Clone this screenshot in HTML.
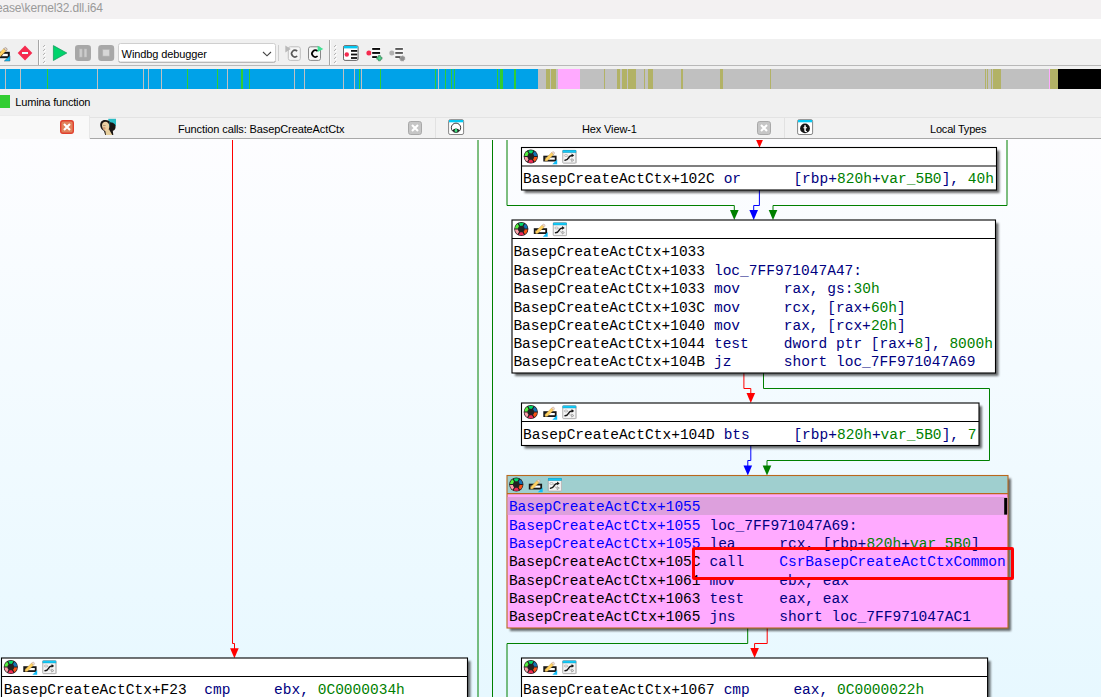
<!DOCTYPE html>
<html><head><meta charset="utf-8"><title>IDA</title>
<style>
html,body{margin:0;padding:0}
body{width:1101px;height:697px;overflow:hidden;position:relative;background:#f0f0f0;font-family:"Liberation Sans",sans-serif;font-size:12px;color:#000}
.abs{position:absolute}
#title{position:absolute;left:0;top:0;width:1101px;height:19px;background:#f3f1f2}
#title span{position:absolute;right:998.3px;top:0px;font-size:12px;letter-spacing:-0.16px;color:#9a9a9a;white-space:nowrap;line-height:16px}
#menu{position:absolute;left:0;top:19px;width:1101px;height:20px;background:#fff}
#tb{position:absolute;left:0;top:39px;width:1101px;height:27px;background:#f0f0f0;border-bottom:1px solid #b8b8b8;box-sizing:border-box}
#nav{position:absolute;left:0;top:69px;width:1101px;height:20px;overflow:hidden}
#nav i{position:absolute;top:0;height:20px;display:block}
#graph{position:absolute;left:0;top:139px;width:1101px;height:558px;background:linear-gradient(#fdfdff,#e7f8ff);overflow:hidden}
#g2{position:absolute;left:0;top:-139px;width:1101px;height:697px}
.blk{position:absolute;box-sizing:border-box;border:1px solid #000;background:#fff;box-shadow:2px 2px 2px rgba(0,0,0,.7)}
.blk .hd{height:17px;border-bottom:1px solid #000}
.blk.hl{border-color:#C07840;background:#FFAAFF}
.blk.hl .hd{background:#A0CFCF;border-bottom-color:#C07840}
.ic{position:absolute}
.t{position:absolute;font-family:"Liberation Mono",monospace;font-size:14.53px;line-height:18px;white-space:pre}
.k{color:#000} .n{color:#000080} .g{color:#008000} .b{color:#0000FF} .b2{color:#0000FF}
.ui{position:absolute;white-space:nowrap;line-height:14px}
</style></head><body>
<div id="title"><span>ease\kernel32.dll.i64</span></div>
<div id="menu"></div>
<div id="tb"></div>

<svg class="abs" style="left:0;top:39px" width="420" height="27" viewBox="0 39 420 27">
<!-- pencil (cut) -->
<rect x="-7" y="52.8" width="15.8" height="4.4" fill="#fff" stroke="#141414" stroke-width="2"/>
<path d="M-3 53.8H3.6L1.4 56.4H-3Z" fill="#141414"/>
<path d="M4.3 61H9.9V55.8Z" fill="#10C0F8" stroke="#16506a" stroke-width="0.5"/>
<path d="M-3 57.2L-2.6 55.2L3.9 48.6L6.1 50.8L-0.4 57.2Z" fill="#FFD262" stroke="#C89A40" stroke-width="0.4"/>
<path d="M3.9 48.6L4.4 48.1A1.65 1.65 0 0 1 6.8 50.3L6.1 50.8Z" fill="#F6DCCC" stroke="#8c847c" stroke-width="0.7"/>
<!-- stop sign diamond -->
<path d="M25 45.6L32.3 53L25 60.4L17.7 53Z" fill="#F52B4F"/>
<rect x="22" y="52" width="6" height="2" fill="#eaffff"/>
<!-- separators & grips -->
<rect x="38" y="40" width="1" height="25" fill="#a6a6a6"/><rect x="39" y="40" width="1" height="25" fill="#fdfdfd"/>
<g fill="#b4b4b4"><rect x="44" y="45" width="1" height="1"/><rect x="43" y="46" width="1" height="1"/><rect x="45" y="46" width="1" height="1" fill="#fff"/><rect x="44" y="47" width="1" height="1" fill="#fff"/><rect x="44" y="49" width="1" height="1"/><rect x="43" y="50" width="1" height="1"/><rect x="45" y="50" width="1" height="1" fill="#fff"/><rect x="44" y="51" width="1" height="1" fill="#fff"/><rect x="44" y="53" width="1" height="1"/><rect x="43" y="54" width="1" height="1"/><rect x="45" y="54" width="1" height="1" fill="#fff"/><rect x="44" y="55" width="1" height="1" fill="#fff"/><rect x="44" y="57" width="1" height="1"/><rect x="43" y="58" width="1" height="1"/><rect x="45" y="58" width="1" height="1" fill="#fff"/><rect x="44" y="59" width="1" height="1" fill="#fff"/><rect x="44" y="61" width="1" height="1"/><rect x="43" y="62" width="1" height="1"/><rect x="45" y="62" width="1" height="1" fill="#fff"/><rect x="44" y="63" width="1" height="1" fill="#fff"/></g>
<!-- play -->
<path d="M53.4 45.6V60.5L66.8 53Z" fill="#00D46C" stroke="#13935a" stroke-width="0.7" stroke-linejoin="round"/>
<!-- pause -->
<rect x="75" y="45" width="16" height="16" rx="3.2" fill="#a8a8a8"/>
<rect x="79.6" y="49" width="2.5" height="8" fill="#cdcdcd" stroke="#bdbdbd" stroke-width="0.5"/><rect x="84.2" y="49" width="2.5" height="8" fill="#cdcdcd" stroke="#bdbdbd" stroke-width="0.5"/>
<!-- stop -->
<rect x="98.2" y="45" width="16" height="16" rx="3.2" fill="#a8a8a8"/>
<rect x="102.8" y="49.5" width="6.6" height="6.6" fill="#d6d6d6" stroke="#b4b4b4" stroke-width="0.6"/>
<!-- combo -->
<rect x="118.5" y="43.5" width="157" height="18.6" rx="2" fill="#fff" stroke="#cfcfcf" stroke-width="1"/>
<path d="M118.8 61.2Q118.8 62.4 120.5 62.4H273.5Q275.4 62.4 275.4 61" fill="none" stroke="#b4b4b4" stroke-width="1"/>
<path d="M263 52L267 55.8L271 52" fill="none" stroke="#444" stroke-width="1.1"/>
<rect x="278" y="45" width="1" height="16" fill="#cfcfcf"/>
<!-- C icons -->
<rect x="288.3" y="46.8" width="12" height="13.6" rx="2" fill="#f6f6f6" stroke="#b9b9b9" stroke-width="0.9"/>
<path d="M297.2 51.2A3.3 3.3 0 1 0 297.2 56" fill="none" stroke="#595959" stroke-width="1.6"/>
<path d="M285.3 45.6V52.4L290.8 49Z" fill="#b8b8b8"/>
<rect x="308.5" y="46.8" width="12" height="13.6" rx="2" fill="#f6f6f6" stroke="#7c7c7c" stroke-width="0.9"/>
<path d="M317.6 51.2A3.3 3.3 0 1 0 317.6 56" fill="none" stroke="#000" stroke-width="1.7"/>
<path d="M317.6 45.7V52.1L323.3 48.9Z" fill="#3FE293"/>
<rect x="329" y="40" width="1" height="25" fill="#a6a6a6"/><rect x="330" y="40" width="1" height="25" fill="#fdfdfd"/>
<g fill="#b4b4b4"><rect x="335" y="45" width="1" height="1"/><rect x="334" y="46" width="1" height="1"/><rect x="336" y="46" width="1" height="1" fill="#fff"/><rect x="335" y="47" width="1" height="1" fill="#fff"/><rect x="335" y="49" width="1" height="1"/><rect x="334" y="50" width="1" height="1"/><rect x="336" y="50" width="1" height="1" fill="#fff"/><rect x="335" y="51" width="1" height="1" fill="#fff"/><rect x="335" y="53" width="1" height="1"/><rect x="334" y="54" width="1" height="1"/><rect x="336" y="54" width="1" height="1" fill="#fff"/><rect x="335" y="55" width="1" height="1" fill="#fff"/><rect x="335" y="57" width="1" height="1"/><rect x="334" y="58" width="1" height="1"/><rect x="336" y="58" width="1" height="1" fill="#fff"/><rect x="335" y="59" width="1" height="1" fill="#fff"/><rect x="335" y="61" width="1" height="1"/><rect x="334" y="62" width="1" height="1"/><rect x="336" y="62" width="1" height="1" fill="#fff"/><rect x="335" y="63" width="1" height="1" fill="#fff"/></g>
<!-- icon3 -->
<rect x="343.5" y="45.6" width="14.6" height="14.8" rx="1.6" fill="#fff" stroke="#555" stroke-width="0.9"/>
<rect x="344" y="46" width="13.6" height="2.4" fill="#06C8F2"/>
<circle cx="346.8" cy="54.5" r="2.2" fill="#F52B4F"/>
<g fill="#111"><rect x="351" y="50" width="6.2" height="1.8"/><rect x="351" y="53.6" width="6.2" height="1.8"/><rect x="351" y="57.1" width="6.2" height="1.8"/></g>
<!-- icon4 -->
<circle cx="368.9" cy="52.9" r="2.5" fill="#F52B4F"/>
<g fill="#fff"><rect x="371.6" y="47.2" width="9" height="3.4"/><rect x="371.6" y="51.2" width="9" height="3.4"/><rect x="371.6" y="55.4" width="6" height="3.4"/></g>
<g fill="#0a0a0a"><rect x="372.2" y="48" width="7.9" height="1.9"/><rect x="372.2" y="52" width="7.9" height="1.9"/><rect x="372.2" y="56.1" width="5" height="1.9"/></g>
<path d="M378.4 55.6h2v1.6h1.6v2h-1.6v1.6h-2v-1.6h-1.6v-2h1.6z" fill="#4FDB8E" stroke="#2c6e4a" stroke-width="0.6"/>
<!-- icon5 -->
<circle cx="391.8" cy="52.9" r="2.5" fill="#b2b2b2"/>
<g fill="#fafafa"><rect x="394.8" y="47.2" width="8.8" height="3.4"/><rect x="394.8" y="51.2" width="8.8" height="3.4"/><rect x="394.8" y="55.4" width="6" height="3.4"/></g>
<g fill="#5a5a5a"><rect x="395.3" y="48" width="7.6" height="1.9"/><rect x="395.3" y="52" width="7.6" height="1.9"/><rect x="395.3" y="56.1" width="5" height="1.9"/></g>
<circle cx="402.3" cy="58.5" r="2.4" fill="#8f8f8f" stroke="#9c9c9c" stroke-width="1.2" stroke-dasharray="1.1 0.9"/>
</svg>
<div class="ui" style="left:121.6px;top:46.5px;font-size:11px;letter-spacing:-0.1px">Windbg debugger</div>

<div id="nav"><i style="left:0px;width:538px;background:#00A2E8"></i><i style="left:538px;width:520px;background:#C0C0C0"></i><i style="left:1058px;width:43px;background:#000"></i><i style="left:5px;width:1px;background:#C0C0C0"></i><i style="left:20px;width:1px;background:#C0C0C0"></i><i style="left:97px;width:1px;background:#C0C0C0"></i><i style="left:143px;width:1px;background:#C0C0C0"></i><i style="left:148px;width:1px;background:#C0C0C0"></i><i style="left:161px;width:1px;background:#C0C0C0"></i><i style="left:227px;width:1px;background:#C0C0C0"></i><i style="left:294px;width:1px;background:#C0C0C0"></i><i style="left:304px;width:1px;background:#C0C0C0"></i><i style="left:343px;width:1px;background:#C0C0C0"></i><i style="left:354px;width:1px;background:#C0C0C0"></i><i style="left:361px;width:1px;background:#C0C0C0"></i><i style="left:438px;width:1px;background:#C0C0C0"></i><i style="left:47px;width:1px;background:#32CD32"></i><i style="left:187px;width:1px;background:#32CD32"></i><i style="left:217px;width:1px;background:#32CD32"></i><i style="left:249px;width:1px;background:#32CD32"></i><i style="left:359px;width:1px;background:#32CD32"></i><i style="left:380px;width:1px;background:#32CD32"></i><i style="left:435px;width:1px;background:#32CD32"></i><i style="left:445px;width:1px;background:#32CD32"></i><i style="left:451px;width:1px;background:#32CD32"></i><i style="left:454px;width:1px;background:#32CD32"></i><i style="left:497px;width:1px;background:#32CD32"></i><i style="left:241px;width:2px;background:#32CD32"></i><i style="left:500px;width:3px;background:#32CD32"></i><i style="left:514px;width:2px;background:#32CD32"></i><i style="left:546px;width:4px;background:#B2B266"></i><i style="left:551px;width:5px;background:#B2B266"></i><i style="left:604px;width:1px;background:#B2B266"></i><i style="left:617px;width:3px;background:#B2B266"></i><i style="left:622px;width:5px;background:#B2B266"></i><i style="left:628px;width:8px;background:#B2B266"></i><i style="left:644px;width:1px;background:#B2B266"></i><i style="left:648px;width:5px;background:#B2B266"></i><i style="left:681px;width:2px;background:#B2B266"></i><i style="left:720px;width:3px;background:#B2B266"></i><i style="left:770px;width:1px;background:#B2B266"></i><i style="left:985px;width:1px;background:#B2B266"></i><i style="left:987px;width:1px;background:#B2B266"></i><i style="left:991px;width:1px;background:#B2B266"></i><i style="left:993px;width:8px;background:#B2B266"></i><i style="left:1050px;width:8px;background:#B2B266"></i><i style="left:558px;width:22px;background:#FFAAFF"></i><i style="left:1049px;width:1px;background:#FFAAFF"></i></div>
<div class="abs" style="left:0;top:95px;width:10px;height:13px;background:#32CD32"></div>
<div class="ui" style="left:15.3px;top:95px;font-size:11px;letter-spacing:-0.18px">Lumina function</div>

<div class="abs" style="left:0;top:117px;width:1101px;height:22px;background:#f2f2f2;border-top:1px solid #e3e3e3;border-bottom:1px solid #a8a8a8;box-sizing:border-box"></div>
<div class="abs" style="left:0;top:115px;width:90px;height:24px;background:#f9f9f9;border-top:1px solid #ececec;border-right:1px solid #e8e8e8;box-sizing:border-box"></div>
<svg class="abs" style="left:0;top:112px" width="1101" height="30" viewBox="0 112 1101 30">
<rect x="60.7" y="120.7" width="12.6" height="12.6" rx="2.2" fill="#E1825C" stroke="#E0402E" stroke-width="1.4"/><path d="M64 124L70 130M70 124L64 130" stroke="#fff" stroke-width="2.1"/><rect x="408.5" y="121.5" width="13" height="13" rx="2.2" fill="#c6c6c6" stroke="#a9a9a9" stroke-width="1"/><path d="M412 125L418 131M418 125L412 131" stroke="#fff" stroke-width="2.1"/><rect x="757.5" y="121.5" width="13" height="13" rx="2.2" fill="#c6c6c6" stroke="#a9a9a9" stroke-width="1"/><path d="M761 125L767 131M767 125L761 131" stroke="#fff" stroke-width="2.1"/>
<rect x="435" y="118" width="1" height="20" fill="#e2e2e2"/><rect x="784" y="118" width="1" height="20" fill="#e2e2e2"/>
<!-- portrait -->
<rect x="108.3" y="118.8" width="7.7" height="7.3" fill="#2CBCC4"/>
<path d="M100.3 126C99.8 122 102 119.8 105 119.9C108 119.8 109.5 121.3 110.8 122.5C113 122.3 115.8 124 115.6 127C115.6 129.5 114 130.5 112.8 130.8L113.3 134.9H105.2L104 131C102 130 100.6 128 100.3 126Z" fill="#1a1412"/>
<path d="M105.3 130.4L109 129.3L112.3 134.9H105.9Z" fill="#E6CE9C"/>
<path d="M102 125.5C102 123 103.5 121.8 105.5 121.8C107.5 121.8 109.2 123.5 109.3 126C109.4 128.5 108.5 131 106.3 131.3C104 131.3 102.2 128.5 102 125.5Z" fill="#EBCFA3"/>
<circle cx="104.2" cy="128.4" r="1.3" fill="#C87850" opacity="0.55"/>
<path d="M103 125.6H105.6" stroke="#6a5040" stroke-width="0.6" opacity="0.8"/>
<path d="M109.6 121.6L109.6 126.3" stroke="#176a74" stroke-width="0.7"/>
<!-- hex icon -->
<rect x="448.6" y="119.700" width="15" height="14.800" rx="1.600" fill="#fff" stroke="#777" stroke-width="0.900"/>
<rect x="449" y="120" width="14.200" height="2.300" fill="#06C8F2"/>
<circle cx="456" cy="127.800" r="4.700" fill="#fff" stroke="#222" stroke-width="0.900"/>
<path d="M452.300 130.300Q456 126.500 459.700 130.300Q456 134 452.300 130.300Z" fill="#1c1c1c"/>
<path d="M456 128L457.600 130.500L456 133L454.400 130.500Z" fill="#45E585"/>
<!-- local types icon -->
<rect x="797.600" y="119.700" width="15" height="14.800" rx="1.600" fill="#fff" stroke="#777" stroke-width="0.900"/>
<rect x="798" y="120" width="14.200" height="2.300" fill="#06C8F2"/>
<circle cx="805" cy="128.400" r="4.900" fill="#141414"/>
<path d="M804.300 125.300H805.800V127.200H807V128.300H805.800V130.500Q805.800 131.300 807 131.100V132.100Q804.300 132.600 804.300 130.600V128.300H803.400V127.200H804.300Z" fill="#fff"/>
</svg>
<div class="ui" style="left:178px;top:122px;font-size:11px;letter-spacing:-0.11px">Function calls: BasepCreateActCtx</div>
<div class="ui" style="left:582px;top:122px;font-size:11px;letter-spacing:-0.13px">Hex View-1</div>
<div class="ui" style="left:930px;top:122px;font-size:11px;letter-spacing:-0.2px">Local Types</div>

<div id="graph"><div id="g2">
<svg class="abs" style="left:0;top:0" width="1101" height="697" viewBox="0 0 1101 697"><defs><filter id="sh" x="-5%" y="-20%" width="110%" height="150%"><feGaussianBlur in="SourceAlpha" stdDeviation="1.05"/><feOffset dx="3" dy="3"/><feComponentTransfer><feFuncA type="linear" slope="0.58"/></feComponentTransfer></filter></defs>
<g fill="none" stroke-width="1">
<path d="M478 139V697" stroke="#008000"/>
<path d="M492.5 139V697" stroke="#008000"/>
<path d="M507 139V205.5H734.3V211" stroke="#008000"/>
<path d="M1007 139V205.5H773V211" stroke="#008000"/>
<path d="M759.4 190V205.5H753.7V211" stroke="#0000FF"/>
<path d="M743.9 373V388.5H750.8V394" stroke="#FF0000"/>
<path d="M763.5 373V388.5H989.5V460.5H767V466" stroke="#008000"/>
<path d="M750.8 446V460.5H747.8V466" stroke="#0000FF"/>
<path d="M747.7 628V643.5H507V697" stroke="#008000"/>
<path d="M767.2 628V643.5H754.6V649" stroke="#FF0000"/>
<path d="M232.5 139V643.5H234.5V649" stroke="#FF0000"/>
</g>
<path d="M755.2 137.8H763.8L759.5 147.8Z" fill="#FF0000" stroke="none"/><path d="M730.0 210H738.5999999999999L734.3 220Z" fill="#008000" stroke="none"/><path d="M749.4000000000001 210H758.0L753.7 220Z" fill="#0000FF" stroke="none"/><path d="M768.7 210H777.3L773 220Z" fill="#008000" stroke="none"/>
<path d="M746.5 393H755.0999999999999L750.8 403Z" fill="#FF0000" stroke="none"/><path d="M743.5 465.5H752.0999999999999L747.8 475.5Z" fill="#0000FF" stroke="none"/><path d="M762.7 465.5H771.3L767 475.5Z" fill="#008000" stroke="none"/><path d="M750.3000000000001 648H758.9L754.6 658Z" fill="#FF0000" stroke="none"/><path d="M230.1 648.2H238.70000000000002L234.4 658.2Z" fill="#FF0000" stroke="none"/>
<rect x="0" y="139" width="1101" height="1" fill="#fdfdff"/><rect x="521.5" y="147.5" width="475.0" height="42.5" fill="#fff" filter="url(#sh)"/><rect x="521.5" y="147.5" width="475.0" height="42.5" fill="#fff"/><rect x="521.5" y="147.5" width="475.0" height="42.5" fill="none" stroke="#000" stroke-width="1.1"/><path d="M521.5 166.0H996.5" stroke="#000" stroke-width="1.1" fill="none"/><g transform="translate(523.70,149.40)"><circle cx="7.1" cy="7.1" r="7.1" fill="#2a2224"/><path d="M7.1 7.1L3.95 1.64A6.3 6.3 0 0 1 10.25 1.64Z" fill="#00D868"/><path d="M7.1 7.1L10.25 1.64A6.3 6.3 0 0 1 13.40 7.10Z" fill="#1272B4"/><path d="M7.1 7.1L13.40 7.10A6.3 6.3 0 0 1 10.25 12.56Z" fill="#F85414"/><path d="M7.1 7.1L10.25 12.56A6.3 6.3 0 0 1 3.95 12.56Z" fill="#F02A58"/><path d="M7.1 7.1L3.95 12.56A6.3 6.3 0 0 1 0.80 7.10Z" fill="#FFA2AA"/><path d="M7.1 7.1L0.80 7.10A6.3 6.3 0 0 1 3.95 1.64Z" fill="#54F040"/><path d="M7.1 7.1L13.70 7.10M7.1 7.1L10.40 12.82M7.1 7.1L3.80 12.82M7.1 7.1L0.50 7.10M7.1 7.1L3.80 1.38M7.1 7.1L10.40 1.38" stroke="#241c1e" stroke-width="1.15" fill="none"/><circle cx="7.1" cy="7.1" r="3.35" fill="#222"/></g><g transform="translate(543.30,150.50)"><rect x="0.9" y="6.1" width="11.5" height="4" fill="#fff" stroke="#181818" stroke-width="1.8"/><path d="M1.8 7H6.2L4 9.2H1.8Z" fill="#181818"/><path d="M9 13.7H13.9V9Z" fill="#10BCF6"/><path d="M1.7 9.9L2.1 8.2L8.3 2.1L10.3 4.1L4.1 10.2L2.2 10.5Z" fill="#FFD262" stroke="#C89A40" stroke-width="0.4"/><path d="M8.3 2.1L8.9 1.5A1.42 1.42 0 0 1 10.9 3.5L10.3 4.1Z" fill="#F2D8CA" stroke="#B09888" stroke-width="0.4"/></g><g transform="translate(562.30,149.90)"><rect x="0.45" y="0.45" width="13.2" height="12.8" rx="0.8" fill="#f4f4f4" stroke="#a6a6a6" stroke-width="0.9"/><rect x="13.4" y="1.2" width="0.8" height="12.2" fill="#c0c0c0"/><rect x="0.3" y="0.2" width="13.6" height="2.6" fill="#1792B4"/><rect x="0.6" y="0.6" width="13" height="1.8" fill="#12C8F6"/><g fill="none"><ellipse cx="3.7" cy="5.6" rx="1.7" ry="1" stroke="#a8a8a8" stroke-width="0.7"/><path d="M5.4 5.9C6.6 6.8 7 10.2 9.2 10.2" stroke="#b0b0b0" stroke-width="0.8"/><path d="M9.4 8.7L11.6 10.2L9.4 11.7Z" stroke="#8c8c8c" stroke-width="0.7" fill="#f4f4f4"/><path d="M2.7 10.4C5.2 10.4 5.8 8.8 6.4 7.6C7.1 6 7.8 5.5 9.6 5.5" stroke="#161616" stroke-width="1.5" stroke-linecap="round"/></g><path d="M9.3 3.7L11.9 5.5L9.3 7.3Z" fill="#161616"/></g><rect x="512.0" y="220.0" width="483.5" height="153.0" fill="#fff" filter="url(#sh)"/><rect x="512.0" y="220.0" width="483.5" height="153.0" fill="#fff"/><rect x="512.0" y="220.0" width="483.5" height="153.0" fill="none" stroke="#000" stroke-width="1.1"/><path d="M512.0 238.5H995.5" stroke="#000" stroke-width="1.1" fill="none"/><g transform="translate(514.20,221.90)"><circle cx="7.1" cy="7.1" r="7.1" fill="#2a2224"/><path d="M7.1 7.1L3.95 1.64A6.3 6.3 0 0 1 10.25 1.64Z" fill="#00D868"/><path d="M7.1 7.1L10.25 1.64A6.3 6.3 0 0 1 13.40 7.10Z" fill="#1272B4"/><path d="M7.1 7.1L13.40 7.10A6.3 6.3 0 0 1 10.25 12.56Z" fill="#F85414"/><path d="M7.1 7.1L10.25 12.56A6.3 6.3 0 0 1 3.95 12.56Z" fill="#F02A58"/><path d="M7.1 7.1L3.95 12.56A6.3 6.3 0 0 1 0.80 7.10Z" fill="#FFA2AA"/><path d="M7.1 7.1L0.80 7.10A6.3 6.3 0 0 1 3.95 1.64Z" fill="#54F040"/><path d="M7.1 7.1L13.70 7.10M7.1 7.1L10.40 12.82M7.1 7.1L3.80 12.82M7.1 7.1L0.50 7.10M7.1 7.1L3.80 1.38M7.1 7.1L10.40 1.38" stroke="#241c1e" stroke-width="1.15" fill="none"/><circle cx="7.1" cy="7.1" r="3.35" fill="#222"/></g><g transform="translate(533.80,223.00)"><rect x="0.9" y="6.1" width="11.5" height="4" fill="#fff" stroke="#181818" stroke-width="1.8"/><path d="M1.8 7H6.2L4 9.2H1.8Z" fill="#181818"/><path d="M9 13.7H13.9V9Z" fill="#10BCF6"/><path d="M1.7 9.9L2.1 8.2L8.3 2.1L10.3 4.1L4.1 10.2L2.2 10.5Z" fill="#FFD262" stroke="#C89A40" stroke-width="0.4"/><path d="M8.3 2.1L8.9 1.5A1.42 1.42 0 0 1 10.9 3.5L10.3 4.1Z" fill="#F2D8CA" stroke="#B09888" stroke-width="0.4"/></g><g transform="translate(552.80,222.40)"><rect x="0.45" y="0.45" width="13.2" height="12.8" rx="0.8" fill="#f4f4f4" stroke="#a6a6a6" stroke-width="0.9"/><rect x="13.4" y="1.2" width="0.8" height="12.2" fill="#c0c0c0"/><rect x="0.3" y="0.2" width="13.6" height="2.6" fill="#1792B4"/><rect x="0.6" y="0.6" width="13" height="1.8" fill="#12C8F6"/><g fill="none"><ellipse cx="3.7" cy="5.6" rx="1.7" ry="1" stroke="#a8a8a8" stroke-width="0.7"/><path d="M5.4 5.9C6.6 6.8 7 10.2 9.2 10.2" stroke="#b0b0b0" stroke-width="0.8"/><path d="M9.4 8.7L11.6 10.2L9.4 11.7Z" stroke="#8c8c8c" stroke-width="0.7" fill="#f4f4f4"/><path d="M2.7 10.4C5.2 10.4 5.8 8.8 6.4 7.6C7.1 6 7.8 5.5 9.6 5.5" stroke="#161616" stroke-width="1.5" stroke-linecap="round"/></g><path d="M9.3 3.7L11.9 5.5L9.3 7.3Z" fill="#161616"/></g><rect x="521.5" y="403.0" width="457.5" height="42.5" fill="#fff" filter="url(#sh)"/><rect x="521.5" y="403.0" width="457.5" height="42.5" fill="#fff"/><rect x="521.5" y="403.0" width="457.5" height="42.5" fill="none" stroke="#000" stroke-width="1.1"/><path d="M521.5 421.5H979.0" stroke="#000" stroke-width="1.1" fill="none"/><g transform="translate(523.70,404.90)"><circle cx="7.1" cy="7.1" r="7.1" fill="#2a2224"/><path d="M7.1 7.1L3.95 1.64A6.3 6.3 0 0 1 10.25 1.64Z" fill="#00D868"/><path d="M7.1 7.1L10.25 1.64A6.3 6.3 0 0 1 13.40 7.10Z" fill="#1272B4"/><path d="M7.1 7.1L13.40 7.10A6.3 6.3 0 0 1 10.25 12.56Z" fill="#F85414"/><path d="M7.1 7.1L10.25 12.56A6.3 6.3 0 0 1 3.95 12.56Z" fill="#F02A58"/><path d="M7.1 7.1L3.95 12.56A6.3 6.3 0 0 1 0.80 7.10Z" fill="#FFA2AA"/><path d="M7.1 7.1L0.80 7.10A6.3 6.3 0 0 1 3.95 1.64Z" fill="#54F040"/><path d="M7.1 7.1L13.70 7.10M7.1 7.1L10.40 12.82M7.1 7.1L3.80 12.82M7.1 7.1L0.50 7.10M7.1 7.1L3.80 1.38M7.1 7.1L10.40 1.38" stroke="#241c1e" stroke-width="1.15" fill="none"/><circle cx="7.1" cy="7.1" r="3.35" fill="#222"/></g><g transform="translate(543.30,406.00)"><rect x="0.9" y="6.1" width="11.5" height="4" fill="#fff" stroke="#181818" stroke-width="1.8"/><path d="M1.8 7H6.2L4 9.2H1.8Z" fill="#181818"/><path d="M9 13.7H13.9V9Z" fill="#10BCF6"/><path d="M1.7 9.9L2.1 8.2L8.3 2.1L10.3 4.1L4.1 10.2L2.2 10.5Z" fill="#FFD262" stroke="#C89A40" stroke-width="0.4"/><path d="M8.3 2.1L8.9 1.5A1.42 1.42 0 0 1 10.9 3.5L10.3 4.1Z" fill="#F2D8CA" stroke="#B09888" stroke-width="0.4"/></g><g transform="translate(562.30,405.40)"><rect x="0.45" y="0.45" width="13.2" height="12.8" rx="0.8" fill="#f4f4f4" stroke="#a6a6a6" stroke-width="0.9"/><rect x="13.4" y="1.2" width="0.8" height="12.2" fill="#c0c0c0"/><rect x="0.3" y="0.2" width="13.6" height="2.6" fill="#1792B4"/><rect x="0.6" y="0.6" width="13" height="1.8" fill="#12C8F6"/><g fill="none"><ellipse cx="3.7" cy="5.6" rx="1.7" ry="1" stroke="#a8a8a8" stroke-width="0.7"/><path d="M5.4 5.9C6.6 6.8 7 10.2 9.2 10.2" stroke="#b0b0b0" stroke-width="0.8"/><path d="M9.4 8.7L11.6 10.2L9.4 11.7Z" stroke="#8c8c8c" stroke-width="0.7" fill="#f4f4f4"/><path d="M2.7 10.4C5.2 10.4 5.8 8.8 6.4 7.6C7.1 6 7.8 5.5 9.6 5.5" stroke="#161616" stroke-width="1.5" stroke-linecap="round"/></g><path d="M9.3 3.7L11.9 5.5L9.3 7.3Z" fill="#161616"/></g><rect x="507.0" y="475.5" width="501.0" height="152.5" fill="#FFAAFF" filter="url(#sh)"/><rect x="507.0" y="475.5" width="501.0" height="152.5" fill="#FFAAFF"/><rect x="507.0" y="475.5" width="501.0" height="18.100000000000023" fill="#9FCFCF"/><rect x="507.0" y="475.5" width="501.0" height="152.5" fill="none" stroke="#B9681E" stroke-width="1.1"/><path d="M507.0 493.6H1008.0" stroke="#B9681E" stroke-width="1.1" fill="none"/><g transform="translate(509.20,477.40)"><circle cx="7.1" cy="7.1" r="7.1" fill="#2a2224"/><path d="M7.1 7.1L3.95 1.64A6.3 6.3 0 0 1 10.25 1.64Z" fill="#00D868"/><path d="M7.1 7.1L10.25 1.64A6.3 6.3 0 0 1 13.40 7.10Z" fill="#1272B4"/><path d="M7.1 7.1L13.40 7.10A6.3 6.3 0 0 1 10.25 12.56Z" fill="#F85414"/><path d="M7.1 7.1L10.25 12.56A6.3 6.3 0 0 1 3.95 12.56Z" fill="#F02A58"/><path d="M7.1 7.1L3.95 12.56A6.3 6.3 0 0 1 0.80 7.10Z" fill="#FFA2AA"/><path d="M7.1 7.1L0.80 7.10A6.3 6.3 0 0 1 3.95 1.64Z" fill="#54F040"/><path d="M7.1 7.1L13.70 7.10M7.1 7.1L10.40 12.82M7.1 7.1L3.80 12.82M7.1 7.1L0.50 7.10M7.1 7.1L3.80 1.38M7.1 7.1L10.40 1.38" stroke="#241c1e" stroke-width="1.15" fill="none"/><circle cx="7.1" cy="7.1" r="3.35" fill="#222"/></g><g transform="translate(528.80,478.50)"><rect x="0.9" y="6.1" width="11.5" height="4" fill="#fff" stroke="#181818" stroke-width="1.8"/><path d="M1.8 7H6.2L4 9.2H1.8Z" fill="#181818"/><path d="M9 13.7H13.9V9Z" fill="#10BCF6"/><path d="M1.7 9.9L2.1 8.2L8.3 2.1L10.3 4.1L4.1 10.2L2.2 10.5Z" fill="#FFD262" stroke="#C89A40" stroke-width="0.4"/><path d="M8.3 2.1L8.9 1.5A1.42 1.42 0 0 1 10.9 3.5L10.3 4.1Z" fill="#F2D8CA" stroke="#B09888" stroke-width="0.4"/></g><g transform="translate(547.80,477.90)"><rect x="0.45" y="0.45" width="13.2" height="12.8" rx="0.8" fill="#f4f4f4" stroke="#a6a6a6" stroke-width="0.9"/><rect x="13.4" y="1.2" width="0.8" height="12.2" fill="#c0c0c0"/><rect x="0.3" y="0.2" width="13.6" height="2.6" fill="#1792B4"/><rect x="0.6" y="0.6" width="13" height="1.8" fill="#12C8F6"/><g fill="none"><ellipse cx="3.7" cy="5.6" rx="1.7" ry="1" stroke="#a8a8a8" stroke-width="0.7"/><path d="M5.4 5.9C6.6 6.8 7 10.2 9.2 10.2" stroke="#b0b0b0" stroke-width="0.8"/><path d="M9.4 8.7L11.6 10.2L9.4 11.7Z" stroke="#8c8c8c" stroke-width="0.7" fill="#f4f4f4"/><path d="M2.7 10.4C5.2 10.4 5.8 8.8 6.4 7.6C7.1 6 7.8 5.5 9.6 5.5" stroke="#161616" stroke-width="1.5" stroke-linecap="round"/></g><path d="M9.3 3.7L11.9 5.5L9.3 7.3Z" fill="#161616"/></g><rect x="507.6" y="497" width="499.8" height="18" fill="#DDA0DD"/><rect x="1004.2" y="498" width="3" height="16.6" fill="#000"/><rect x="521.5" y="658.0" width="466.1" height="62.0" fill="#fff" filter="url(#sh)"/><rect x="521.5" y="658.0" width="466.1" height="62.0" fill="#fff"/><rect x="521.5" y="658.0" width="466.1" height="62.0" fill="none" stroke="#000" stroke-width="1.1"/><path d="M521.5 676.5H987.6" stroke="#000" stroke-width="1.1" fill="none"/><g transform="translate(523.70,659.90)"><circle cx="7.1" cy="7.1" r="7.1" fill="#2a2224"/><path d="M7.1 7.1L3.95 1.64A6.3 6.3 0 0 1 10.25 1.64Z" fill="#00D868"/><path d="M7.1 7.1L10.25 1.64A6.3 6.3 0 0 1 13.40 7.10Z" fill="#1272B4"/><path d="M7.1 7.1L13.40 7.10A6.3 6.3 0 0 1 10.25 12.56Z" fill="#F85414"/><path d="M7.1 7.1L10.25 12.56A6.3 6.3 0 0 1 3.95 12.56Z" fill="#F02A58"/><path d="M7.1 7.1L3.95 12.56A6.3 6.3 0 0 1 0.80 7.10Z" fill="#FFA2AA"/><path d="M7.1 7.1L0.80 7.10A6.3 6.3 0 0 1 3.95 1.64Z" fill="#54F040"/><path d="M7.1 7.1L13.70 7.10M7.1 7.1L10.40 12.82M7.1 7.1L3.80 12.82M7.1 7.1L0.50 7.10M7.1 7.1L3.80 1.38M7.1 7.1L10.40 1.38" stroke="#241c1e" stroke-width="1.15" fill="none"/><circle cx="7.1" cy="7.1" r="3.35" fill="#222"/></g><g transform="translate(543.30,661.00)"><rect x="0.9" y="6.1" width="11.5" height="4" fill="#fff" stroke="#181818" stroke-width="1.8"/><path d="M1.8 7H6.2L4 9.2H1.8Z" fill="#181818"/><path d="M9 13.7H13.9V9Z" fill="#10BCF6"/><path d="M1.7 9.9L2.1 8.2L8.3 2.1L10.3 4.1L4.1 10.2L2.2 10.5Z" fill="#FFD262" stroke="#C89A40" stroke-width="0.4"/><path d="M8.3 2.1L8.9 1.5A1.42 1.42 0 0 1 10.9 3.5L10.3 4.1Z" fill="#F2D8CA" stroke="#B09888" stroke-width="0.4"/></g><g transform="translate(562.30,660.40)"><rect x="0.45" y="0.45" width="13.2" height="12.8" rx="0.8" fill="#f4f4f4" stroke="#a6a6a6" stroke-width="0.9"/><rect x="13.4" y="1.2" width="0.8" height="12.2" fill="#c0c0c0"/><rect x="0.3" y="0.2" width="13.6" height="2.6" fill="#1792B4"/><rect x="0.6" y="0.6" width="13" height="1.8" fill="#12C8F6"/><g fill="none"><ellipse cx="3.7" cy="5.6" rx="1.7" ry="1" stroke="#a8a8a8" stroke-width="0.7"/><path d="M5.4 5.9C6.6 6.8 7 10.2 9.2 10.2" stroke="#b0b0b0" stroke-width="0.8"/><path d="M9.4 8.7L11.6 10.2L9.4 11.7Z" stroke="#8c8c8c" stroke-width="0.7" fill="#f4f4f4"/><path d="M2.7 10.4C5.2 10.4 5.8 8.8 6.4 7.6C7.1 6 7.8 5.5 9.6 5.5" stroke="#161616" stroke-width="1.5" stroke-linecap="round"/></g><path d="M9.3 3.7L11.9 5.5L9.3 7.3Z" fill="#161616"/></g><rect x="1.5" y="658.0" width="466.0" height="62.0" fill="#fff" filter="url(#sh)"/><rect x="1.5" y="658.0" width="466.0" height="62.0" fill="#fff"/><rect x="1.5" y="658.0" width="466.0" height="62.0" fill="none" stroke="#000" stroke-width="1.1"/><path d="M1.5 676.5H467.5" stroke="#000" stroke-width="1.1" fill="none"/><g transform="translate(3.70,659.90)"><circle cx="7.1" cy="7.1" r="7.1" fill="#2a2224"/><path d="M7.1 7.1L3.95 1.64A6.3 6.3 0 0 1 10.25 1.64Z" fill="#00D868"/><path d="M7.1 7.1L10.25 1.64A6.3 6.3 0 0 1 13.40 7.10Z" fill="#1272B4"/><path d="M7.1 7.1L13.40 7.10A6.3 6.3 0 0 1 10.25 12.56Z" fill="#F85414"/><path d="M7.1 7.1L10.25 12.56A6.3 6.3 0 0 1 3.95 12.56Z" fill="#F02A58"/><path d="M7.1 7.1L3.95 12.56A6.3 6.3 0 0 1 0.80 7.10Z" fill="#FFA2AA"/><path d="M7.1 7.1L0.80 7.10A6.3 6.3 0 0 1 3.95 1.64Z" fill="#54F040"/><path d="M7.1 7.1L13.70 7.10M7.1 7.1L10.40 12.82M7.1 7.1L3.80 12.82M7.1 7.1L0.50 7.10M7.1 7.1L3.80 1.38M7.1 7.1L10.40 1.38" stroke="#241c1e" stroke-width="1.15" fill="none"/><circle cx="7.1" cy="7.1" r="3.35" fill="#222"/></g><g transform="translate(23.30,661.00)"><rect x="0.9" y="6.1" width="11.5" height="4" fill="#fff" stroke="#181818" stroke-width="1.8"/><path d="M1.8 7H6.2L4 9.2H1.8Z" fill="#181818"/><path d="M9 13.7H13.9V9Z" fill="#10BCF6"/><path d="M1.7 9.9L2.1 8.2L8.3 2.1L10.3 4.1L4.1 10.2L2.2 10.5Z" fill="#FFD262" stroke="#C89A40" stroke-width="0.4"/><path d="M8.3 2.1L8.9 1.5A1.42 1.42 0 0 1 10.9 3.5L10.3 4.1Z" fill="#F2D8CA" stroke="#B09888" stroke-width="0.4"/></g><g transform="translate(42.30,660.40)"><rect x="0.45" y="0.45" width="13.2" height="12.8" rx="0.8" fill="#f4f4f4" stroke="#a6a6a6" stroke-width="0.9"/><rect x="13.4" y="1.2" width="0.8" height="12.2" fill="#c0c0c0"/><rect x="0.3" y="0.2" width="13.6" height="2.6" fill="#1792B4"/><rect x="0.6" y="0.6" width="13" height="1.8" fill="#12C8F6"/><g fill="none"><ellipse cx="3.7" cy="5.6" rx="1.7" ry="1" stroke="#a8a8a8" stroke-width="0.7"/><path d="M5.4 5.9C6.6 6.8 7 10.2 9.2 10.2" stroke="#b0b0b0" stroke-width="0.8"/><path d="M9.4 8.7L11.6 10.2L9.4 11.7Z" stroke="#8c8c8c" stroke-width="0.7" fill="#f4f4f4"/><path d="M2.7 10.4C5.2 10.4 5.8 8.8 6.4 7.6C7.1 6 7.8 5.5 9.6 5.5" stroke="#161616" stroke-width="1.5" stroke-linecap="round"/></g><path d="M9.3 3.7L11.9 5.5L9.3 7.3Z" fill="#161616"/></g></svg>
<span class="t k" style="left:523.10px;top:170px">BasepCreateActCtx+102C</span><span class="t n" style="left:723.66px;top:170px">or</span><span class="t n" style="left:793.42px;top:170px">[rbp+</span><span class="t g" style="left:837.02px;top:170px">820h</span><span class="t n" style="left:871.90px;top:170px">+</span><span class="t g" style="left:880.62px;top:170px">var_5B0</span><span class="t n" style="left:941.66px;top:170px">],</span><span class="t g" style="left:967.82px;top:170px">40h</span><span class="t k" style="left:513.40px;top:243px">BasepCreateActCtx+1033</span><span class="t k" style="left:513.40px;top:262px">BasepCreateActCtx+1033</span><span class="t n" style="left:713.96px;top:262px">loc_7FF971047A47:</span><span class="t k" style="left:513.40px;top:280px">BasepCreateActCtx+1033</span><span class="t n" style="left:713.96px;top:280px">mov</span><span class="t n" style="left:783.72px;top:280px">rax, gs:</span><span class="t g" style="left:853.48px;top:280px">30h</span><span class="t k" style="left:513.40px;top:299px">BasepCreateActCtx+103C</span><span class="t n" style="left:713.96px;top:299px">mov</span><span class="t n" style="left:783.72px;top:299px">rcx, [rax+</span><span class="t g" style="left:870.92px;top:299px">60h</span><span class="t n" style="left:897.08px;top:299px">]</span><span class="t k" style="left:513.40px;top:317px">BasepCreateActCtx+1040</span><span class="t n" style="left:713.96px;top:317px">mov</span><span class="t n" style="left:783.72px;top:317px">rax, [rcx+</span><span class="t g" style="left:870.92px;top:317px">20h</span><span class="t n" style="left:897.08px;top:317px">]</span><span class="t k" style="left:513.40px;top:335px">BasepCreateActCtx+1044</span><span class="t n" style="left:713.96px;top:335px">test</span><span class="t n" style="left:783.72px;top:335px">dword ptr [rax+</span><span class="t g" style="left:914.52px;top:335px">8</span><span class="t n" style="left:923.24px;top:335px">],</span><span class="t g" style="left:949.40px;top:335px">8000h</span><span class="t k" style="left:513.40px;top:353px">BasepCreateActCtx+104B</span><span class="t n" style="left:713.96px;top:353px">jz</span><span class="t n" style="left:783.72px;top:353px">short loc_7FF971047A69</span><span class="t k" style="left:523.10px;top:426px">BasepCreateActCtx+104D</span><span class="t n" style="left:723.66px;top:426px">bts</span><span class="t n" style="left:793.42px;top:426px">[rbp+</span><span class="t g" style="left:837.02px;top:426px">820h</span><span class="t n" style="left:871.90px;top:426px">+</span><span class="t g" style="left:880.62px;top:426px">var_5B0</span><span class="t n" style="left:941.66px;top:426px">],</span><span class="t g" style="left:967.82px;top:426px">7</span><span class="t b" style="left:508.90px;top:498px">BasepCreateActCtx+1055</span><span class="t b" style="left:508.90px;top:517px">BasepCreateActCtx+1055</span><span class="t n" style="left:709.46px;top:517px">loc_7FF971047A69:</span><span class="t b" style="left:508.90px;top:535px">BasepCreateActCtx+1055</span><span class="t n" style="left:709.46px;top:535px">lea</span><span class="t n" style="left:779.22px;top:535px">rcx, [rbp+</span><span class="t g" style="left:866.42px;top:535px">820h</span><span class="t n" style="left:901.30px;top:535px">+</span><span class="t g" style="left:910.02px;top:535px">var_5B0</span><span class="t n" style="left:971.06px;top:535px">]</span><span class="t k" style="left:508.90px;top:553px">BasepCreateActCtx+105C</span><span class="t n" style="left:709.46px;top:553px">call</span><span class="t b2" style="left:779.22px;top:553px">CsrBasepCreateActCtxCommon</span><span class="t k" style="left:508.90px;top:572px">BasepCreateActCtx+1061</span><span class="t n" style="left:709.46px;top:572px">mov</span><span class="t n" style="left:779.22px;top:572px">ebx, eax</span><span class="t k" style="left:508.90px;top:590px">BasepCreateActCtx+1063</span><span class="t n" style="left:709.46px;top:590px">test</span><span class="t n" style="left:779.22px;top:590px">eax, eax</span><span class="t k" style="left:508.90px;top:608px">BasepCreateActCtx+1065</span><span class="t n" style="left:709.46px;top:608px">jns</span><span class="t n" style="left:779.22px;top:608px">short loc_7FF971047AC1</span><span class="t k" style="left:523.10px;top:681px">BasepCreateActCtx+1067</span><span class="t n" style="left:723.66px;top:681px">cmp</span><span class="t n" style="left:793.42px;top:681px">eax, </span><span class="t g" style="left:837.02px;top:681px">0C0000022h</span><span class="t k" style="left:3.80px;top:681px">BasepCreateActCtx+F23</span><span class="t n" style="left:204.36px;top:681px">cmp</span><span class="t n" style="left:274.12px;top:681px">ebx, </span><span class="t g" style="left:317.72px;top:681px">0C0000034h</span><div style="position:absolute;left:692px;top:547px;width:316px;height:27px;border:3px solid #FF0000;border-radius:2px"></div>
</div></div>
</body></html>
